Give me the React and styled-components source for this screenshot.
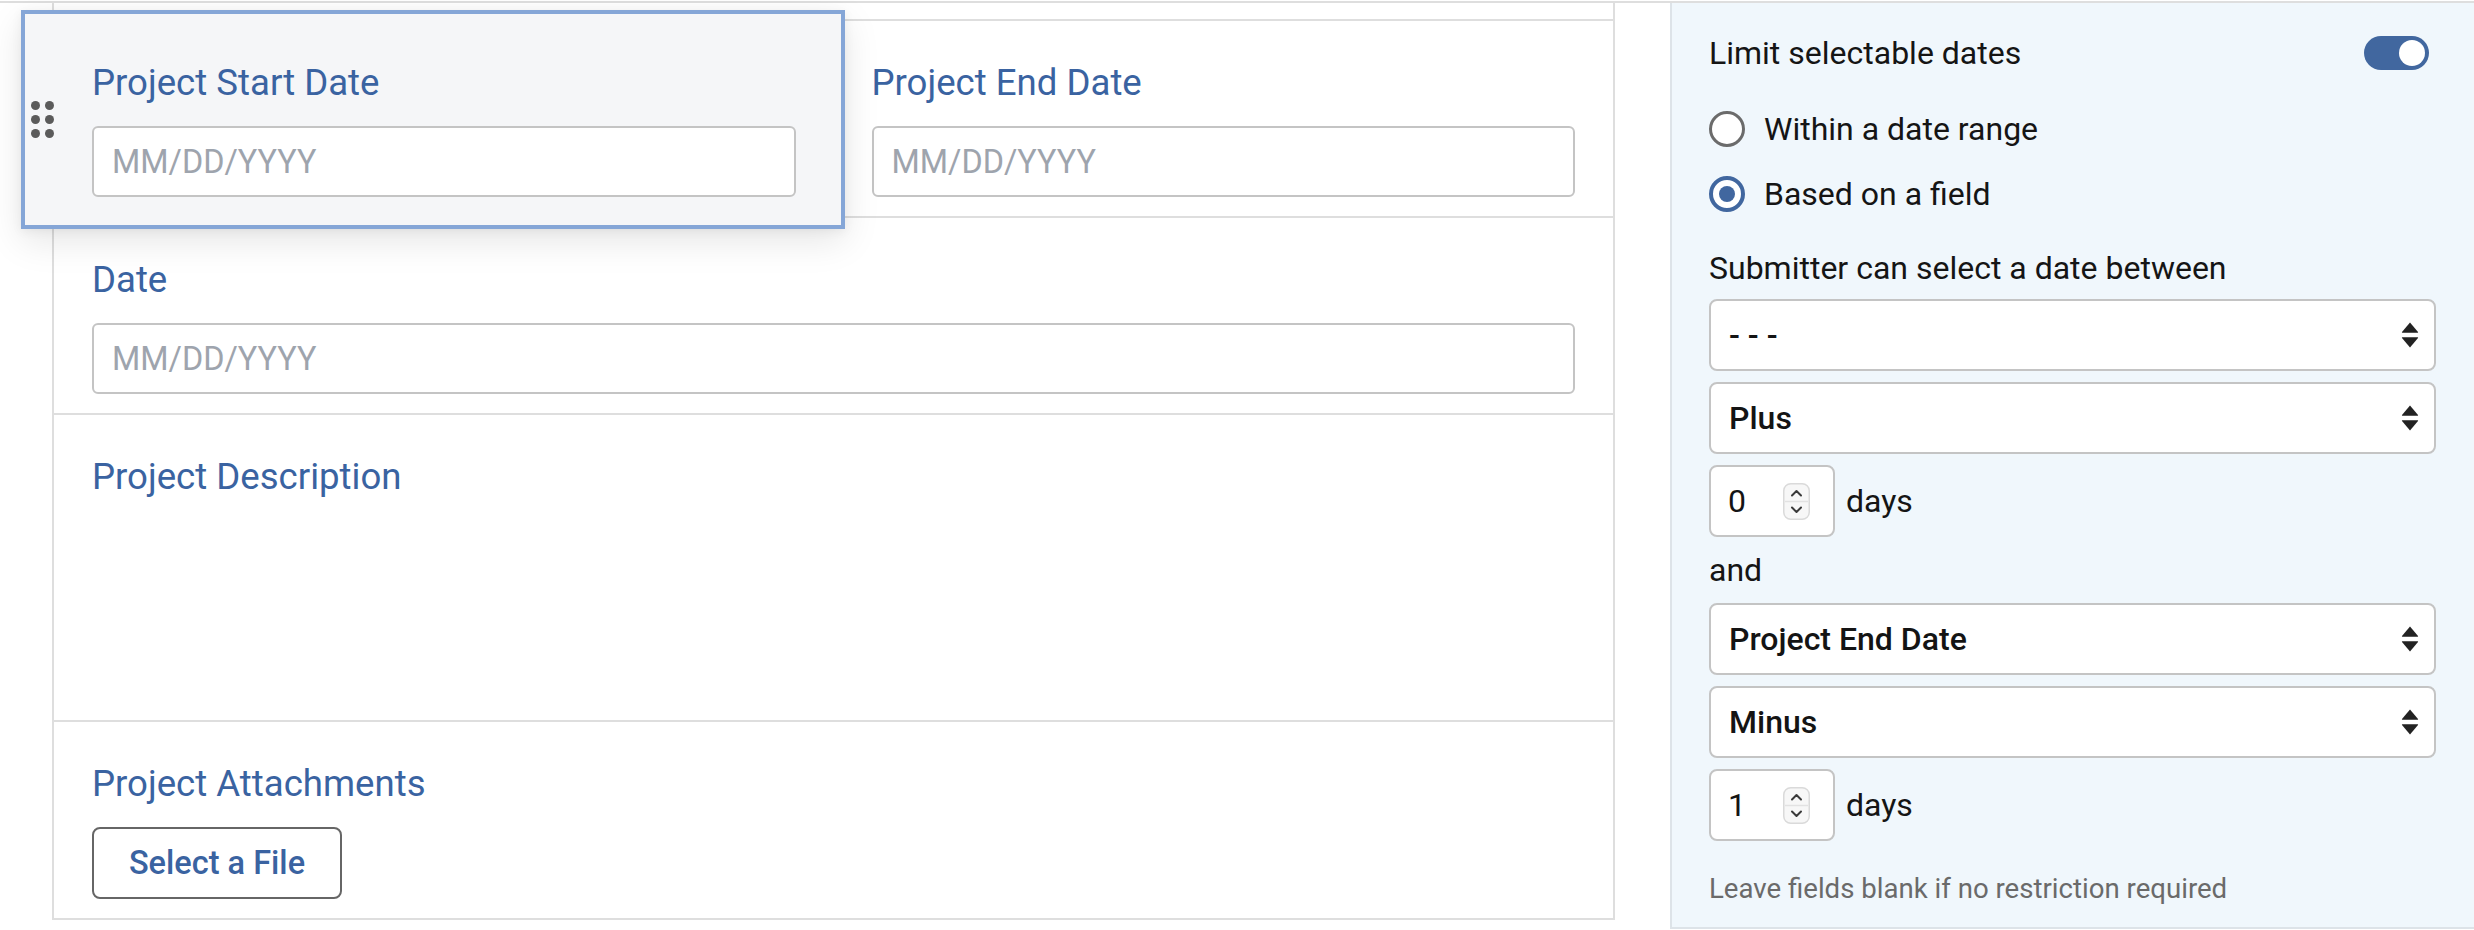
import React from 'react';
import styled, { createGlobalStyle } from 'styled-components';

const GlobalStyle = createGlobalStyle`
  html, body { margin: 0; padding: 0; background: #ffffff; }
  body {
    font-family: Roboto, "Liberation Sans", Arial, sans-serif;
    overflow: hidden;
  }
  * { box-sizing: border-box; }
`;

const Page = styled.div`
  width: 2474px;
  height: 929px;
  margin-top: 1px;
  border-top: 2px solid #dedede;
  display: flex;
  align-items: flex-start;
  padding-left: 52px;
  gap: 55px;
`;

/* ---------- form canvas ---------- */

const FormCard = styled.div`
  width: 1563px;
  border: 2px solid #dedede;
  border-top: none;
  background: #ffffff;
`;

const Row = styled.div`
  display: grid;
  grid-template-columns: ${(p) => (p.$split ? '1fr 1fr' : '1fr')};
  min-height: ${(p) => p.$minHeight || 0}px;
  height: ${(p) => (p.$stub ? '18px' : 'auto')};
  border-bottom: 2px solid #dedede;
  &:last-child { border-bottom: none; }
`;

const Cell = styled.div`
  position: relative;
  padding: 40px 38px 19px;
`;

const Label = styled.div`
  font-size: 36.6px;
  line-height: 43px;
  color: #3a63a1;
  white-space: nowrap;
`;

const DateInput = styled.input`
  display: block;
  width: 100%;
  height: 71px;
  margin-top: 22px;
  padding: 0 18px;
  border: 2px solid #c4c4c4;
  border-radius: 6px;
  background: #ffffff;
  font-family: Roboto, "Liberation Sans", Arial, sans-serif;
  font-size: 32.4px;
  color: #222;
  outline: none;
  &::placeholder { color: #9ea4ad; }
`;

const FileButton = styled.button`
  display: block;
  margin-top: 22px;
  width: 250px;
  height: 72px;
  border: 2px solid #666666;
  border-radius: 8px;
  background: #ffffff;
  color: #3a63a1;
  font-family: Roboto, "Liberation Sans", Arial, sans-serif;
  font-size: 32.5px;
  font-weight: 500;
  cursor: pointer;
`;

const DragCard = styled.div`
  position: absolute;
  left: -33px;
  top: -11px;
  width: 824px;
  padding: 47px 45px 28px 67px;
  background: #f5f6f8;
  border: 4px solid #85a6d7;
  box-shadow: 0 12px 34px rgba(0, 0, 0, 0.10), 0 2px 10px rgba(0, 0, 0, 0.06);
  z-index: 2;
`;

const DragHandle = styled.div`
  position: absolute;
  left: 6px;
  top: 87px;
  display: grid;
  grid-template-columns: repeat(2, 9px);
  grid-auto-rows: 9px;
  column-gap: 5px;
  row-gap: 5px;
`;

const Dot = styled.span`
  width: 9px;
  height: 9px;
  border-radius: 50%;
  background: #5b5b5b;
`;

/* ---------- settings panel ---------- */

const Panel = styled.aside`
  width: 804px;
  height: 926px;
  background: #f0f7fc;
  border-left: 2px solid #dde3e8;
  border-bottom: 2px solid #dde3e8;
  padding: 26px 38px 0 37px;
  display: flex;
  flex-direction: column;
  font-size: 32px;
  color: #151515;
`;

const HeaderRow = styled.div`
  display: flex;
  align-items: center;
  justify-content: space-between;
  height: 48px;
  line-height: 48px;
`;

const Toggle = styled.div`
  width: 65px;
  height: 34px;
  margin-right: 7px;
  border-radius: 17px;
  background: #41679f;
  display: flex;
  align-items: center;
  justify-content: ${(p) => (p.$on ? 'flex-end' : 'flex-start')};
  padding: 0 4px;
`;

const Knob = styled.span`
  width: 26px;
  height: 26px;
  border-radius: 50%;
  background: #ffffff;
`;

const RadioList = styled.div`
  margin-top: 28px;
  display: flex;
  flex-direction: column;
  gap: 17px;
`;

const RadioRow = styled.label`
  display: flex;
  align-items: center;
  gap: 19px;
  height: 48px;
  line-height: 48px;
`;

const RadioCircle = styled.span`
  width: 36px;
  height: 36px;
  border-radius: 50%;
  background: #ffffff;
  border: ${(p) => (p.$checked ? '4px solid #41679f' : '3px solid #6b6b6b')};
  display: flex;
  align-items: center;
  justify-content: center;
  &::after {
    content: '';
    display: ${(p) => (p.$checked ? 'block' : 'none')};
    width: 16px;
    height: 16px;
    border-radius: 50%;
    background: #41679f;
  }
`;

const Text = styled.div`
  margin-top: ${(p) => p.$mt || 0}px;
  line-height: ${(p) => p.$lh || 48}px;
  height: ${(p) => p.$lh || 48}px;
`;

const Controls = styled.div`
  margin-top: 7px;
  display: flex;
  flex-direction: column;
  gap: 11px;
`;

const SelectBox = styled.div`
  height: 72px;
  border: 2px solid #c4c4c4;
  border-radius: 8px;
  background: #ffffff;
  display: flex;
  align-items: center;
  justify-content: space-between;
  padding: 0 15px 0 18px;
  font-size: 32px;
  font-weight: 500;
  color: #141414;
`;

const NumberRow = styled.div`
  display: flex;
  align-items: center;
  gap: 11px;
`;

const NumberBox = styled.div`
  width: 126px;
  height: 72px;
  border: 2px solid #c4c4c4;
  border-radius: 8px;
  background: #ffffff;
  display: flex;
  align-items: center;
  justify-content: space-between;
  padding: 0 23px 0 17px;
  font-size: 32px;
  color: #141414;
`;

const Hint = styled.div`
  margin-top: 27px;
  font-size: 27.6px;
  line-height: 42px;
  color: #6a6a6a;
`;

const SortArrows = () => (
  <svg width="18" height="26" viewBox="0 0 18 26" aria-hidden="true">
    <path d="M9 0.5 L17 10 Q17.5 10.8 16.6 10.8 H1.4 Q0.5 10.8 1 10 Z" fill="#222" />
    <path d="M1.4 15.2 H16.6 Q17.5 15.2 17 16 L9 25.5 L1 16 Q0.5 15.2 1.4 15.2 Z" fill="#222" />
  </svg>
);

const Spinner = () => (
  <svg width="27" height="37" viewBox="0 0 27 37" aria-hidden="true">
    <rect x="0.75" y="0.75" width="25.5" height="35.5" rx="7" fill="#f7f7f7" stroke="#dadada" strokeWidth="1.5" />
    <line x1="2" y1="18.5" x2="25" y2="18.5" stroke="#e2e2e2" strokeWidth="1.5" />
    <path d="M9 12.5 L13.5 8 L18 12.5" fill="none" stroke="#3a3a3a" strokeWidth="2" strokeLinecap="round" strokeLinejoin="round" />
    <path d="M9 24.5 L13.5 29 L18 24.5" fill="none" stroke="#3a3a3a" strokeWidth="2" strokeLinecap="round" strokeLinejoin="round" />
  </svg>
);

const Field = ({ label, placeholder }) => (
  <>
    <Label>{label}</Label>
    <DateInput placeholder={placeholder} readOnly />
  </>
);

const Select = ({ value }) => (
  <SelectBox>
    <span>{value}</span>
    <SortArrows />
  </SelectBox>
);

const DaysInput = ({ value }) => (
  <NumberRow>
    <NumberBox>
      <span>{value}</span>
      <Spinner />
    </NumberBox>
    <span>days</span>
  </NumberRow>
);

export default function App() {
  return (
    <>
      <GlobalStyle />
      <Page>
        <FormCard>
          <Row $stub />
          <Row $split>
            <Cell>
              <DragCard>
                <DragHandle>
                  {Array.from({ length: 6 }).map((_, i) => (
                    <Dot key={i} />
                  ))}
                </DragHandle>
                <Field label="Project Start Date" placeholder="MM/DD/YYYY" />
              </DragCard>
            </Cell>
            <Cell>
              <Field label="Project End Date" placeholder="MM/DD/YYYY" />
            </Cell>
          </Row>
          <Row>
            <Cell>
              <Field label="Date" placeholder="MM/DD/YYYY" />
            </Cell>
          </Row>
          <Row $minHeight={307}>
            <Cell>
              <Label>Project Description</Label>
            </Cell>
          </Row>
          <Row>
            <Cell>
              <Label>Project Attachments</Label>
              <FileButton>Select a File</FileButton>
            </Cell>
          </Row>
        </FormCard>

        <Panel>
          <HeaderRow>
            <span>Limit selectable dates</span>
            <Toggle $on>
              <Knob />
            </Toggle>
          </HeaderRow>
          <RadioList>
            <RadioRow>
              <RadioCircle />
              <span>Within a date range</span>
            </RadioRow>
            <RadioRow>
              <RadioCircle $checked />
              <span>Based on a field</span>
            </RadioRow>
          </RadioList>
          <Text $mt={26}>Submitter can select a date between</Text>
          <Controls>
            <Select value="- - -" />
            <Select value="Plus" />
            <DaysInput value="0" />
            <Text $lh={44}>and</Text>
            <Select value="Project End Date" />
            <Select value="Minus" />
            <DaysInput value="1" />
          </Controls>
          <Hint>Leave fields blank if no restriction required</Hint>
        </Panel>
      </Page>
    </>
  );
}
